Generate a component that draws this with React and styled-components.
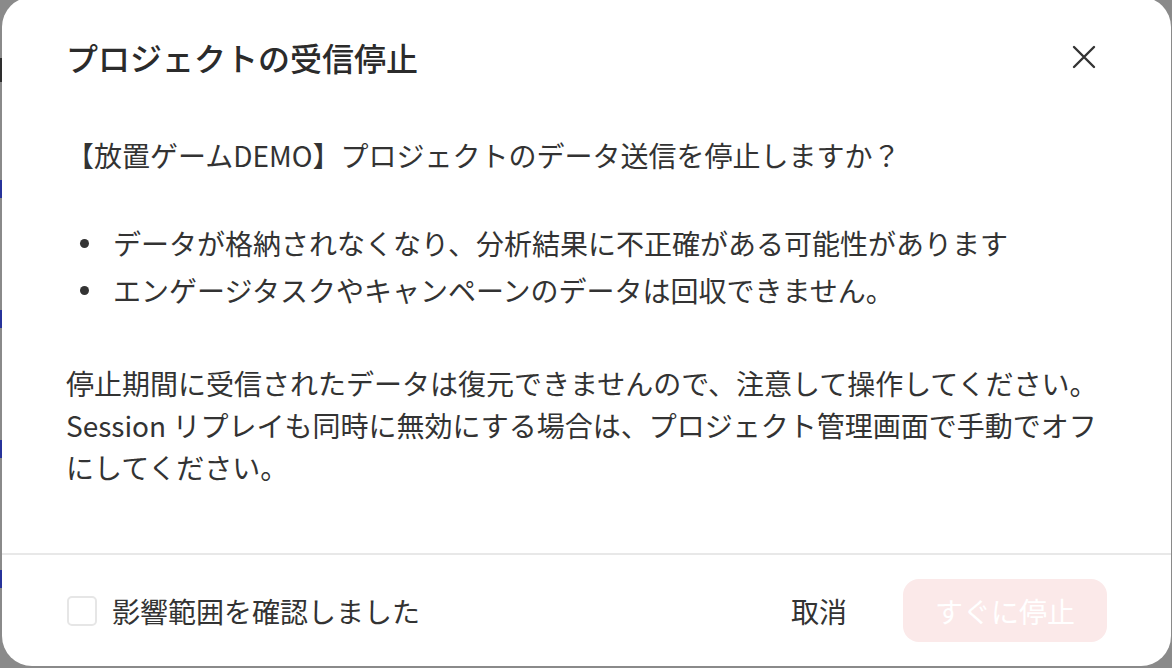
import React, { useState } from "react";
import styled, { createGlobalStyle } from "styled-components";

const GlobalStyle = createGlobalStyle`
  html, body {
    margin: 0;
    padding: 0;
    background: #8a8a8a;
    overflow: hidden;
  }
  body {
    font-family: "Noto Sans CJK JP", "Noto Sans", sans-serif;
    color: #333333;
  }
`;

const Stage = styled.div`
  display: flex;
  width: 1172px;
  height: 668px;
`;

// sliver of the dimmed page that peeks out beside the dialog
const Rail = styled.div`
  width: 2px;
  flex-shrink: 0;
  display: flex;
  flex-direction: column;
`;

const RailMark = styled.span`
  display: block;
  height: ${({ h }) => h}px;
  margin-top: ${({ top }) => top}px;
  background: ${({ tone }) => (tone === "ink" ? "#2e2e2e" : "#27339a")};
`;

const Modal = styled.section`
  width: 1169px;
  height: 669px;
  margin-top: -3px;
  background: #ffffff;
  border-radius: 30px;
  display: flex;
  flex-direction: column;
  overflow: hidden;
`;

const Header = styled.header`
  display: flex;
  align-items: center;
  justify-content: space-between;
  padding: 36px 75px 0 64px;
`;

const Title = styled.h2`
  margin: 0;
  font-size: 32px;
  line-height: 48px;
  font-weight: 500;
  color: #2b2b2b;
`;

const CloseButton = styled.button`
  width: 24px;
  height: 24px;
  padding: 0;
  border: 0;
  background: none;
  cursor: pointer;
  display: flex;
  color: #333333;
`;

const Body = styled.div`
  flex: 1;
  padding: 53px 64px 0 64px;
  font-size: 28px;
  line-height: 42px;
`;

const Para = styled.p`
  margin: ${({ mt }) => mt || 0}px 0 0;
`;

const List = styled.ul`
  list-style: none;
  margin: 46px 0 0;
  padding: 0;
`;

const Item = styled.li`
  display: flex;
  align-items: center;
  & + & {
    margin-top: 5px;
  }
  &::before {
    content: "";
    width: 9px;
    height: 9px;
    border-radius: 50%;
    background: #333333;
    margin: 0 24px 0 14px;
    flex-shrink: 0;
  }
`;

const Divider = styled.hr`
  margin: 0;
  border: 0;
  height: 2px;
  background: #e8e8e8;
`;

const Footer = styled.footer`
  height: 111px;
  display: flex;
  align-items: center;
  justify-content: space-between;
  padding: 0 64px 0 65px;
`;

const Confirm = styled.label`
  display: flex;
  align-items: center;
  gap: 15px;
  font-size: 28px;
  line-height: 42px;
  cursor: pointer;
`;

const Box = styled.span`
  width: 30px;
  height: 30px;
  box-sizing: border-box;
  border: 2px solid ${({ on }) => (on ? "#e25555" : "#e6e6e6")};
  background: ${({ on }) => (on ? "#e25555" : "#ffffff")};
  border-radius: 5px;
`;

const Actions = styled.div`
  display: flex;
  align-items: center;
  gap: 28px;
`;

const TextButton = styled.button`
  border: 0;
  background: none;
  font-family: inherit;
  font-size: 28px;
  line-height: 42px;
  color: #333333;
  padding: 0 28px;
  height: 63px;
  cursor: pointer;
`;

const DangerButton = styled.button`
  border: 0;
  height: 63px;
  padding: 0 32px;
  border-radius: 16px;
  font-family: inherit;
  font-size: 28px;
  line-height: 42px;
  color: #ffffff;
  background: ${({ disabled }) => (disabled ? "#fbe9e9" : "#e25555")};
  cursor: ${({ disabled }) => (disabled ? "not-allowed" : "pointer")};
`;

const railMarks = [
  { top: 58, h: 24, tone: "ink" },
  { top: 98, h: 18 },
  { top: 112, h: 18 },
  { top: 112, h: 18 },
  { top: 112, h: 18 },
];

export default function App() {
  const [checked, setChecked] = useState(false);

  return (
    <>
      <GlobalStyle />
      <Stage>
        <Rail>
          {railMarks.map((m, i) => (
            <RailMark key={i} top={m.top} h={m.h} tone={m.tone} />
          ))}
        </Rail>
        <Modal>
          <Header>
            <Title>プロジェクトの受信停止</Title>
            <CloseButton aria-label="閉じる">
              <svg width="24" height="24" viewBox="0 0 24 24" fill="none">
                <path
                  d="M2 2L22 22M22 2L2 22"
                  stroke="currentColor"
                  strokeWidth="2.4"
                  strokeLinecap="round"
                />
              </svg>
            </CloseButton>
          </Header>
          <Body>
            <Para>【放置ゲームDEMO】プロジェクトのデータ送信を停止しますか？</Para>
            <List>
              <Item>データが格納されなくなり、分析結果に不正確がある可能性があります</Item>
              <Item>エンゲージタスクやキャンペーンのデータは回収できません。</Item>
            </List>
            <Para mt={51}>
              停止期間に受信されたデータは復元できませんので、注意して操作してください。
              <br />
              Session リプレイも同時に無効にする場合は、プロジェクト管理画面で手動でオフにしてください。
            </Para>
          </Body>
          <Divider />
          <Footer>
            <Confirm onClick={() => setChecked(!checked)}>
              <Box on={checked} />
              影響範囲を確認しました
            </Confirm>
            <Actions>
              <TextButton>取消</TextButton>
              <DangerButton disabled={!checked}>すぐに停止</DangerButton>
            </Actions>
          </Footer>
        </Modal>
      </Stage>
    </>
  );
}
